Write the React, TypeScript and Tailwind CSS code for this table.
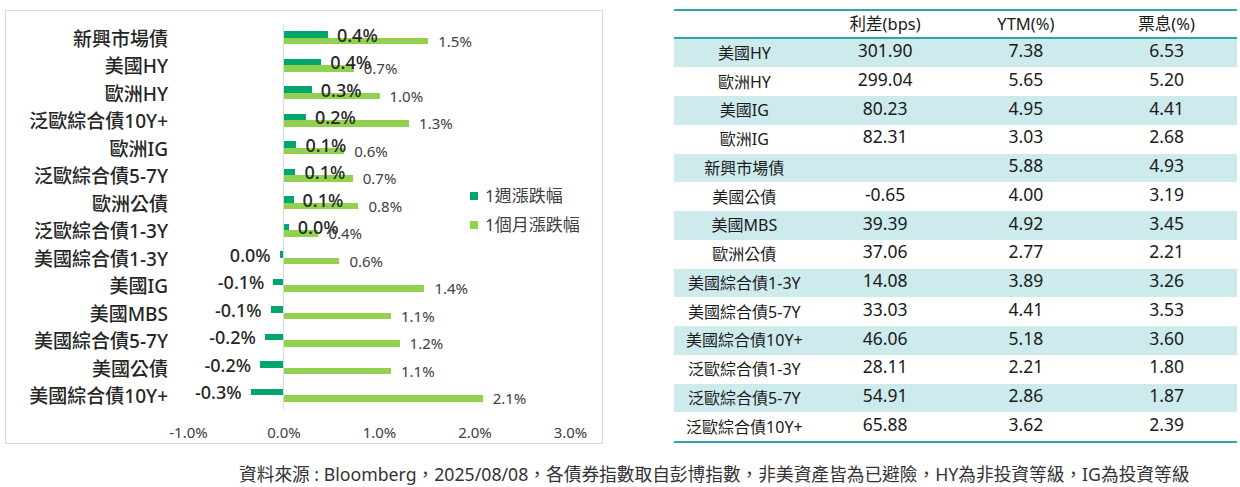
import React from 'react';

type Row = { name: string; w: number; wl: string; m: number; ml: string };

// weekly / monthly change, in %
const ROWS: Row[] = [
  { name: '新興市場債', w: 0.46, wl: '0.4%', m: 1.51, ml: '1.5%' },
  { name: '美國HY', w: 0.39, wl: '0.4%', m: 0.73, ml: '0.7%' },
  { name: '歐洲HY', w: 0.29, wl: '0.3%', m: 1.0, ml: '1.0%' },
  { name: '泛歐綜合債10Y+', w: 0.23, wl: '0.2%', m: 1.31, ml: '1.3%' },
  { name: '歐洲IG', w: 0.13, wl: '0.1%', m: 0.63, ml: '0.6%' },
  { name: '泛歐綜合債5-7Y', w: 0.12, wl: '0.1%', m: 0.72, ml: '0.7%' },
  { name: '歐洲公債', w: 0.1, wl: '0.1%', m: 0.78, ml: '0.8%' },
  { name: '泛歐綜合債1-3Y', w: 0.05, wl: '0.0%', m: 0.36, ml: '0.4%' },
  { name: '美國綜合債1-3Y', w: -0.035, wl: '0.0%', m: 0.58, ml: '0.6%' },
  { name: '美國IG', w: -0.1, wl: '-0.1%', m: 1.47, ml: '1.4%' },
  { name: '美國MBS', w: -0.13, wl: '-0.1%', m: 1.12, ml: '1.1%' },
  { name: '美國綜合債5-7Y', w: -0.19, wl: '-0.2%', m: 1.21, ml: '1.2%' },
  { name: '美國公債', w: -0.24, wl: '-0.2%', m: 1.12, ml: '1.1%' },
  { name: '美國綜合債10Y+', w: -0.34, wl: '-0.3%', m: 2.08, ml: '2.1%' },
];

const TABLE: string[][] = [
  ['美國HY', '301.90', '7.38', '6.53'],
  ['歐洲HY', '299.04', '5.65', '5.20'],
  ['美國IG', '80.23', '4.95', '4.41'],
  ['歐洲IG', '82.31', '3.03', '2.68'],
  ['新興市場債', '', '5.88', '4.93'],
  ['美國公債', '-0.65', '4.00', '3.19'],
  ['美國MBS', '39.39', '4.92', '3.45'],
  ['歐洲公債', '37.06', '2.77', '2.21'],
  ['美國綜合債1-3Y', '14.08', '3.89', '3.26'],
  ['美國綜合債5-7Y', '33.03', '4.41', '3.53'],
  ['美國綜合債10Y+', '46.06', '5.18', '3.60'],
  ['泛歐綜合債1-3Y', '28.11', '2.21', '1.80'],
  ['泛歐綜合債5-7Y', '54.91', '2.86', '1.87'],
  ['泛歐綜合債10Y+', '65.88', '3.62', '2.39'],
];

const AXIS = ['-1.0%', '0.0%', '1.0%', '2.0%', '3.0%'];
const PX = 95.5; // px per 1%

const WeekLabel = ({ text }: { text: string }) => (
  <span className="relative z-10 text-[18px] font-medium leading-none text-[#262626] whitespace-nowrap">{text}</span>
);

const ChartRow: React.FC<{ row: Row }> = ({ row }) => {
  const wWidth = Math.abs(row.w) * PX;
  const mWidth = row.m * PX;
  return (
    <div className="flex h-[27.5px]">
      <div className="w-[162px] flex items-center justify-end pt-[3px] text-[19px] font-medium leading-none text-[#262626] whitespace-nowrap">
        {row.name}
      </div>
      {/* negative side */}
      <div className="w-[115px] flex flex-col justify-center">
        <div className="h-[6.5px] flex items-center justify-end">
          {row.w < 0 && (
            <>
              <span className="relative z-10 mr-[9px] flex">
                <WeekLabel text={row.wl} />
              </span>
              <div className="h-full shrink-0 bg-[#00a66b]" style={{ width: wWidth }} />
            </>
          )}
        </div>
        <div className="h-[6.5px]" />
      </div>
      <div className="w-px bg-[#d9d9d9]" />
      {/* positive side */}
      <div className="flex-1 flex flex-col justify-center">
        <div className="h-[6.5px] flex items-center">
          {row.w >= 0 && (
            <>
              <div className="h-full shrink-0 bg-[#00a66b]" style={{ width: wWidth }} />
              <span className="relative z-10 ml-[9px] flex">
                <WeekLabel text={row.wl} />
              </span>
            </>
          )}
        </div>
        <div className="h-[6.5px] flex items-center">
          <div className="h-full shrink-0 bg-[#92d050]" style={{ width: mWidth }} />
          <span className="ml-[10px] text-[15px] leading-none text-[#404040] whitespace-nowrap">{row.ml}</span>
        </div>
      </div>
    </div>
  );
};

export default function App() {
  return (
    <div className="w-[1240px] h-[487px] bg-white overflow-hidden font-['Noto_Sans','Noto_Sans_CJK_TC',sans-serif]">
      <div className="flex items-start pt-[9px]">
        {/* Chart */}
        <div className="relative ml-[5px] mt-[1px] w-[598px] h-[434px] border border-[#d9d9d9]">
          <div className="pt-[13px]">
            {ROWS.map((r) => (
              <ChartRow key={r.name} row={r} />
            ))}
          </div>
          <div className="ml-[182.5px] mt-[13px] w-[382px] h-[20px] flex justify-between items-center">
            {AXIS.map((a) => (
              <div key={a} className="w-0 flex justify-center">
                <span className="text-[15px] leading-none text-[#404040] whitespace-nowrap">{a}</span>
              </div>
            ))}
          </div>

          {/* Legend */}
          <div className="absolute left-[464px] top-[170px] flex flex-col text-[17px] leading-none text-[#404040]">
            <div className="h-[29px] flex items-center gap-[7px]">
              <span className="w-[8px] h-[8px] bg-[#00a66b]" />
              1週漲跌幅
            </div>
            <div className="h-[29px] flex items-center gap-[7px]">
              <span className="w-[8px] h-[8px] bg-[#92d050]" />
              1個月漲跌幅
            </div>
          </div>
        </div>

        {/* Table */}
        <div className="ml-[71px] w-[563px] border-t-2 border-b-2 border-[#2ba6a9] text-[#1a1a1a]">
          <div className="grid grid-cols-4 h-[27.5px] items-center border-b-2 border-[#2ba6a9] text-[16.5px] leading-none">
            <div />
            <div className="text-center">利差(bps)</div>
            <div className="text-center">YTM(%)</div>
            <div className="text-center">票息(%)</div>
          </div>
          {TABLE.map((r, i) => (
            <div
              key={r[0]}
              className={`grid grid-cols-4 h-[28.75px] items-center ${i % 2 === 0 ? 'bg-[#cdeaec]' : 'bg-white'}`}
            >
              <div className="text-center text-[16px] leading-none whitespace-nowrap">{r[0]}</div>
              {r.slice(1).map((v, j) => (
                <div key={j} className="text-center text-[17.5px] leading-none pb-[4px]">
                  {v}
                </div>
              ))}
            </div>
          ))}
        </div>
      </div>

      {/* Source */}
      <div className="mt-[18px] pl-[239px] text-[17.7px] leading-[24px] text-[#333333] whitespace-nowrap">
        資料來源 : Bloomberg，2025/08/08，各債券指數取自彭博指數，非美資產皆為已避險，HY為非投資等級，IG為投資等級
      </div>
    </div>
  );
}
